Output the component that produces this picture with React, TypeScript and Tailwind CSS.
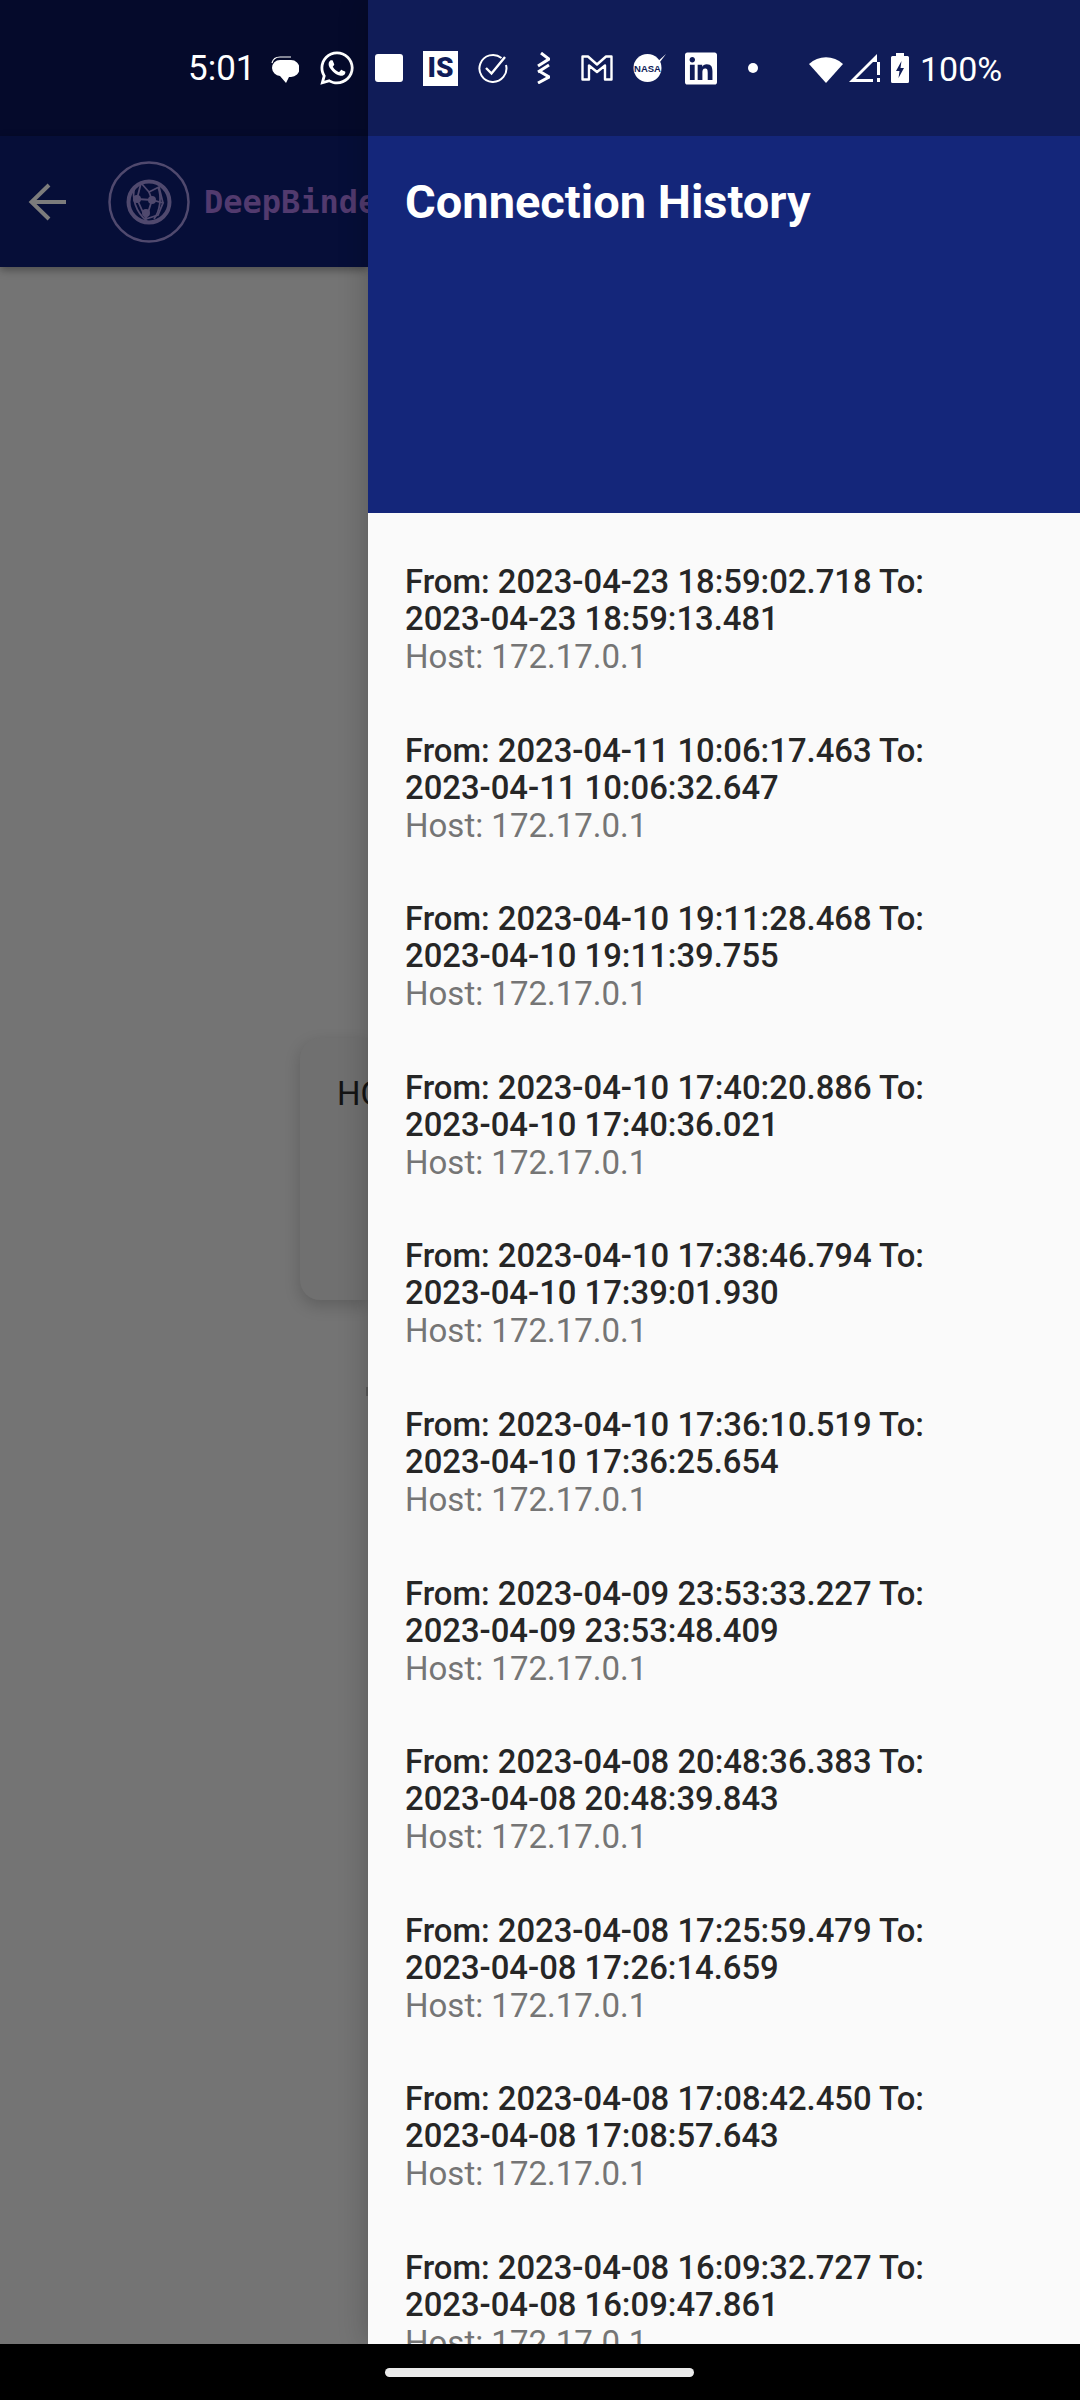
import React from "react";
import { FaWhatsapp, FaLinkedin } from "react-icons/fa";

const rows: [string, string][] = [
  ["2023-04-23 18:59:02.718", "2023-04-23 18:59:13.481"],
  ["2023-04-11 10:06:17.463", "2023-04-11 10:06:32.647"],
  ["2023-04-10 19:11:28.468", "2023-04-10 19:11:39.755"],
  ["2023-04-10 17:40:20.886", "2023-04-10 17:40:36.021"],
  ["2023-04-10 17:38:46.794", "2023-04-10 17:39:01.930"],
  ["2023-04-10 17:36:10.519", "2023-04-10 17:36:25.654"],
  ["2023-04-09 23:53:33.227", "2023-04-09 23:53:48.409"],
  ["2023-04-08 20:48:36.383", "2023-04-08 20:48:39.843"],
  ["2023-04-08 17:25:59.479", "2023-04-08 17:26:14.659"],
  ["2023-04-08 17:08:42.450", "2023-04-08 17:08:57.643"],
  ["2023-04-08 16:09:32.727", "2023-04-08 16:09:47.861"],
];

const navy = "#101c58";

function ChatIcon() {
  return (
    <svg viewBox="0 0 28 27" className="ml-[19px] w-[28px] h-[27px] shrink-0">
      <path d="M1 7 C2 3 5 1 9 1 H20" fill="none" stroke="#fff" strokeWidth="1.2" />
      <path d="M9 4 H20 A8.5 8.5 0 0 1 20 21 H18 L15 27 L9 20 A8.5 8.5 0 0 1 1 12 A8 8 0 0 1 9 4 Z" fill="#fff" />
    </svg>
  );
}

function CheckIcon() {
  return (
    <svg viewBox="0 0 30 30" className="ml-[20px] w-[30px] h-[30px] shrink-0" fill="none" stroke="#fff">
      <path d="M23.5 5 A13.5 13.5 0 1 0 28 12" strokeWidth="2" />
      <path d="M8 15 L13.5 20.5 L27 4" strokeWidth="2.4" />
    </svg>
  );
}

function ZigzagIcon() {
  return (
    <svg viewBox="0 0 13 32" className="ml-[29px] w-[13px] h-[32px] shrink-0" fill="none" stroke="#fff" strokeWidth="3">
      <path d="M4 1 L12 7 L1 14" />
      <path d="M1 20 L12 13" />
      <path d="M2 19 L12 25 L1 31" />
    </svg>
  );
}

function MIcon() {
  return (
    <svg viewBox="0 0 32 26" className="ml-[31px] w-[32px] h-[26px] shrink-0" fill="none" stroke="#fff" strokeWidth="2.4" strokeLinejoin="round">
      <path d="M1.5 1.5 H7 L16 9.5 L25 1.5 H30.5 V24.5 H24 V10.5 L16 17 L8 10.5 V24.5 H1.5 Z" />
    </svg>
  );
}

function NasaIcon() {
  return (
    <svg viewBox="0 0 34 30" className="ml-[19px] w-[34px] h-[30px] shrink-0">
      <circle cx="15.5" cy="15" r="14" fill="#fff" />
      <path d="M24 10 L34 1 L28 9 Z" fill="#fff" />
      <text x="15.5" y="18.5" textAnchor="middle" fontSize="9.5" fontWeight="700" fill={navy} fontFamily="'Liberation Sans', sans-serif">NASA</text>
    </svg>
  );
}

function WifiIcon() {
  return (
    <svg viewBox="0 0 34 29" className="ml-[51px] w-[34px] h-[29px] shrink-0">
      <path d="M0 10 A25 25 0 0 1 34 10 L17 29 Z" fill="#fff" />
    </svg>
  );
}

function SignalIcon() {
  return (
    <svg viewBox="0 0 31 28" className="ml-[6px] w-[31px] h-[28px] shrink-0" fill="#fff">
      <path d="M28 0 L0 28 H24 V25 H7 L24 8 H28 Z" />
      <rect x="28" y="8" width="3" height="13" />
      <rect x="28" y="24" width="3" height="4" />
    </svg>
  );
}

function BatteryIcon() {
  return (
    <svg viewBox="0 0 18 30" className="ml-[11px] w-[18px] h-[30px] shrink-0">
      <path d="M5 0 H13 V3 H16.5 A1.5 1.5 0 0 1 18 4.5 V28.5 A1.5 1.5 0 0 1 16.5 30 H1.5 A1.5 1.5 0 0 1 0 28.5 V4.5 A1.5 1.5 0 0 1 1.5 3 H5 Z" fill="#fff" />
      <path d="M10.5 8 L5 18 H8.5 L7.5 25 L13 15 H9.5 Z" fill={navy} />
    </svg>
  );
}

function Logo() {
  return (
    <svg viewBox="0 0 82 82" className="ml-[42px] w-[82px] h-[82px] shrink-0" fill="none" stroke="#50496e">
      <circle cx="41" cy="41" r="39.5" strokeWidth="2.5" />
      <circle cx="41" cy="41" r="20.5" strokeWidth="4" />
      <g strokeWidth="1.8">
        <path d="M27 26 C23 36 28 52 39 60" />
        <path d="M33 22 L29 38 L38 58 L50 54 L55 42 L44 39 L29 38" />
        <path d="M33 22 L41 31 L51 26 L55 42" />
        <path d="M41 31 L44 39 L38 58" />
        <path d="M50 26 C54 36 52 50 46 58" />
      </g>
      <g fill="#50496e" stroke="none">
        <circle cx="29" cy="38" r="4" />
        <circle cx="44" cy="39" r="4" />
        <circle cx="38" cy="52" r="4" />
      </g>
    </svg>
  );
}

export default function App() {
  return (
    <div className="flex flex-col w-[1080px] h-[2400px] overflow-hidden bg-black font-['Roboto',sans-serif]">
      <div className="flex flex-1 min-h-0">
        <div className="w-[368px] flex flex-col overflow-hidden">
          <div className="h-[136px] shrink-0 bg-[#050a2b] flex items-center pl-[188px] pt-[2px] text-white">
            <span className="w-[64px] shrink-0 text-[35px] leading-[40px]">5:01</span>
            <ChatIcon />
            <FaWhatsapp className="ml-[21px] w-[34px] h-[38px] shrink-0 -translate-y-px text-white" />
          </div>
          <div className="relative z-10 h-[131px] shrink-0 bg-[#060e38] flex items-center pl-[28px] shadow-[0_3px_8px_rgba(0,0,0,0.35)]">
            <svg viewBox="0 0 38 38" className="w-[38px] h-[38px] shrink-0" fill="none" stroke="#7c7c7c" strokeWidth="4">
              <path d="M38 19 H4" />
              <path d="M21 2 L3.5 19 L21 36" />
            </svg>
            <Logo />
            <span className="ml-[14px] whitespace-nowrap text-[32px] leading-[40px] font-bold text-[#523a6e] font-['DejaVu_Sans_Mono',monospace]">DeepBinder</span>
          </div>
          <div className="flex-1 bg-[#747474] pt-[771px]">
            <div className="ml-[300px] h-[262px] rounded-l-[20px] bg-[#707070] pl-[37px] pt-[36px] text-[33px] leading-[40px] text-[#141414] shadow-[0_6px_16px_rgba(0,0,0,0.18)]">
              <div className="w-[31px] overflow-hidden whitespace-nowrap">HO</div>
            </div>
            <div className="ml-[366px] mt-[87px] w-[2px] h-[9px] bg-[#5a5a5a]" />
          </div>
        </div>
        <div className="relative z-20 flex-1 flex flex-col bg-[#fafafa] shadow-[0_0_28px_rgba(0,0,0,0.24)]">
          <div className="h-[136px] shrink-0 bg-[#101c58] flex items-center pl-[7px] text-white">
            <div className="w-[28px] h-[28px] shrink-0 rounded-[3px] bg-white" />
            <div className="ml-[20px] w-[35px] h-[35px] shrink-0 bg-white flex items-center justify-center text-[28px] font-black leading-none text-[#101c58]">IS</div>
            <CheckIcon />
            <ZigzagIcon />
            <MIcon />
            <NasaIcon />
            <FaLinkedin className="ml-[19px] w-[32px] h-[37px] shrink-0 text-white" />
            <div className="ml-[31px] w-[10px] h-[10px] shrink-0 rounded-full bg-white" />
            <WifiIcon />
            <SignalIcon />
            <BatteryIcon />
            <span className="ml-[11px] pt-[2px] text-[34px] leading-[40px] whitespace-nowrap">100%</span>
          </div>
          <div className="h-[377px] shrink-0 bg-[#14267a] pl-[37px] pt-[39px] text-[47px] font-bold text-white leading-[54px]">
            Connection History
          </div>
          <div className="flex-1 min-h-0 overflow-hidden pt-[51px]">
            {rows.map(([from, to]) => (
              <div key={from} className="h-[168.6px] pl-[37px] whitespace-nowrap">
                <div className="text-[32.8px] leading-[37px] font-medium text-[#262626]">From: {from} To:</div>
                <div className="text-[32.8px] leading-[37px] font-medium text-[#262626]">{to}</div>
                <div className="text-[33px] leading-[38px] text-[#757575]">Host: 172.17.0.1</div>
              </div>
            ))}
          </div>
        </div>
      </div>
      <div className="h-[56px] shrink-0 flex items-center pl-[385px]">
        <div className="w-[309px] h-[9px] rounded-full bg-[#ececec]" />
      </div>
    </div>
  );
}
